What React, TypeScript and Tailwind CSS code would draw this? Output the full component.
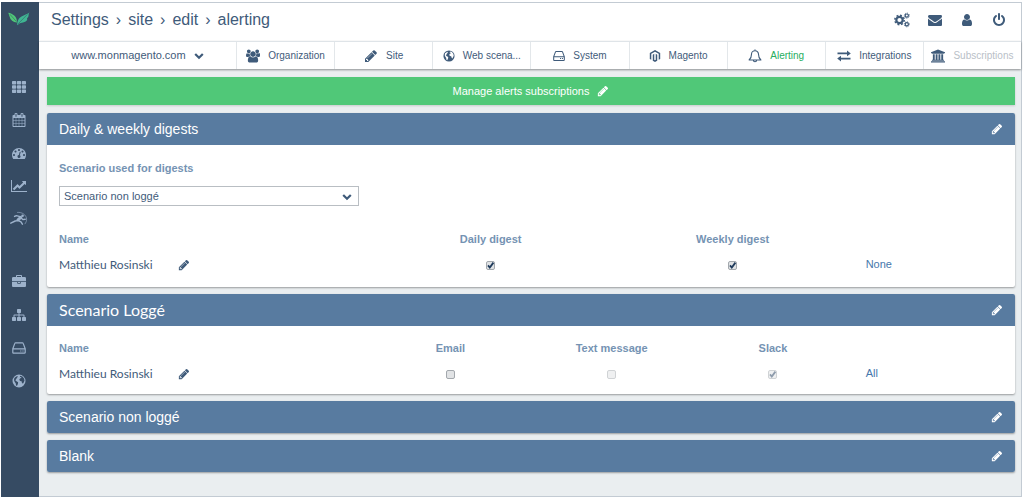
import { ReactNode, useState } from "react";
import { FaMagento } from "react-icons/fa";

type IconProps = { className?: string };

const paths = {
  pencil: "M491 1536l91-91-235-235-91 91v107h128v128h107zm523-928q0-22-22-22-10 0-17 7l-542 542q-7 7-7 17 0 22 22 22 10 0 17-7l542-542q7-7 7-17zm-54-192l416 416-832 832h-416v-416zm683 96q0 53-37 90l-166 166-416-416 166-165q36-38 90-38 53 0 91 38l235 234q37 39 37 91z",
  power: "M1664 896q0 156-61 298t-164 245-245 164-298 61-298-61-245-164-164-245-61-298q0-182 80.5-343t226.5-270q43-32 95.5-25t83.5 50q32 42 24.5 94.5t-49.5 84.5q-98 74-151.5 181t-53.5 228q0 104 40.5 198.5t109.5 163.5 163.5 109.5 198.5 40.5 198.5-40.5 163.5-109.5 109.5-163.5 40.5-198.5q0-121-53.5-228t-151.5-181q-42-32-49.5-84.5t24.5-94.5q31-43 84-50t95 25q146 109 226.5 270t80.5 343zm-640-768v640q0 52-38 90t-90 38-90-38-38-90v-640q0-52 38-90t90-38 90 38 38 90z",
  user: "M1536 1399q0 109-62.5 187t-150.5 78h-854q-88 0-150.5-78t-62.5-187q0-85 8.5-160.5t31.5-152 58.5-131 94-89 134.5-34.5q131 128 313 128t313-128q76 0 134.5 34.5t94 89 58.5 131 31.5 152 8.5 160.5zm-256-887q0 159-112.5 271.5t-271.5 112.5-271.5-112.5-112.5-271.5 112.5-271.5 271.5-112.5 271.5 112.5 112.5 271.5z",
  envelope: "M1792 710v794q0 66-47 113t-113 47h-1472q-66 0-113-47t-47-113v-794q44 49 101 87 362 246 497 345 57 42 92.5 65.5t94.5 48 110 24.5h2q51 0 110-24.5t94.5-48 92.5-65.5q170-123 498-345 57-39 100-87zm0-294q0 79-49 151t-122 123q-376 261-468 325-10 7-42.5 31t-54 38.5-52 32.5-57.5 27-50 9h-2q-23 0-50-9t-57.5-27-52-32.5-54-38.5-42.5-31q-91-64-262-182.5t-205-142.5q-62-42-117-115.5t-55-136.5q0-78 41.5-130t118.5-52h1472q65 0 112.5 47t47.5 113z",
  users: "M529 896q-162 5-265 128h-134q-82 0-138-40.5t-56-118.5q0-353 124-353 6 0 43.5 21t97.5 42.5 119 21.5q67 0 133-23-5 37-5 66 0 159 90 287zm1071 637q0 120-73 189.5t-194 69.5h-874q-121 0-194-69.5t-73-189.5q0-53 3.5-103.5t14-109 26.5-108.5 43-97.5 62-81 85.5-53.5 111.5-20q10 0 43 21.5t73 48 107 48 135 21.5 135-21.5 107-48 73-48 43-21.5q61 0 111.5 20t85.5 53.5 62 81 43 97.5 26.5 108.5 14 109 3.5 103.5zm-1024-1277q0 106-75 181t-181 75-181-75-75-181 75-181 181-75 181 75 75 181zm704 384q0 159-112.5 271.5t-271.5 112.5-271.5-112.5-112.5-271.5 112.5-271.5 271.5-112.5 271.5 112.5 112.5 271.5zm576 225q0 78-56 118.5t-138 40.5h-134q-103-123-265-128 90-128 90-287 0-29-5-66 66 23 133 23 59 0 119-21.5t97.5-42.5 43.5-21q124 0 124 353zm-128-609q0 106-75 181t-181 75-181-75-75-181 75-181 181-75 181 75 75 181z",
  bank: "M896 0l960 384v128h-128q0 26-20.5 45t-48.5 19h-1526q-28 0-48.5-19t-20.5-45h-128v-128zm-704 640h256v768h128v-768h256v768h128v-768h256v768h128v-768h256v768h59q28 0 48.5 19t20.5 45v64h-1664v-64q0-26 20.5-45t48.5-19h59v-768zm1595 960q28 0 48.5 19t20.5 45v128h-1920v-128q0-26 20.5-45t48.5-19h1782z",
  briefcase: "M640 256h512v-128h-512v128zm1152 640v480q0 66-47 113t-113 47h-1472q-66 0-113-47t-47-113v-480h672v160q0 26 19 45t45 19h320q26 0 45-19t19-45v-160h672zm-768 0v128h-256v-128h256zm768-480v384h-1792v-384q0-66 47-113t113-47h352v-160q0-40 28-68t68-28h576q40 0 68 28t28 68v160h352q66 0 113 47t47 113z",
  sitemap: "M1792 1248v320q0 40-28 68t-68 28h-320q-40 0-68-28t-28-68v-320q0-40 28-68t68-28h96v-192h-512v192h96q40 0 68 28t28 68v320q0 40-28 68t-68 28h-320q-40 0-68-28t-28-68v-320q0-40 28-68t68-28h96v-192h-512v192h96q40 0 68 28t28 68v320q0 40-28 68t-68 28h-320q-40 0-68-28t-28-68v-320q0-40 28-68t68-28h96v-192q0-52 38-90t90-38h512v-192h-96q-40 0-68-28t-28-68v-320q0-40 28-68t68-28h320q40 0 68 28t28 68v320q0 40-28 68t-68 28h-96v192h512q52 0 90 38t38 90v192h96q40 0 68 28t28 68z",
  chart: "M2048 1536v128h-2048v-1536h128v1408h1920zm-128-1248v435q0 21-19.5 29.5t-35.5-7.5l-121-121-633 633q-10 10-23 10t-23-10l-233-233-416 416-192-192 585-585q10-10 23-10t23 10l233 233 464-464-121-121q-16-16-7.5-35.5t29.5-19.5h435q14 0 23 9t9 23z",
  gauge: "M384 1152q0-53-37.5-90.5t-90.5-37.5-90.5 37.5-37.5 90.5 37.5 90.5 90.5 37.5 90.5-37.5 37.5-90.5zm192-448q0-53-37.5-90.5t-90.5-37.5-90.5 37.5-37.5 90.5 37.5 90.5 90.5 37.5 90.5-37.5 37.5-90.5zm428 481l101-382q6-26-7.5-48.5t-38.5-29.5-48 6.5-30 39.5l-101 382q-60 5-107 43.5t-63 98.5q-20 77 20 146t117 89 146-20 89-117q16-60-6-117t-72-91zm660-33q0-53-37.5-90.5t-90.5-37.5-90.5 37.5-37.5 90.5 37.5 90.5 90.5 37.5 90.5-37.5 37.5-90.5zm-640-640q0-53-37.5-90.5t-90.5-37.5-90.5 37.5-37.5 90.5 37.5 90.5 90.5 37.5 90.5-37.5 37.5-90.5zm448 192q0-53-37.5-90.5t-90.5-37.5-90.5 37.5-37.5 90.5 37.5 90.5 90.5 37.5 90.5-37.5 37.5-90.5zm320 448q0 261-141 483-19 29-54 29h-1402q-35 0-54-29-141-221-141-483 0-182 71-348t191-286 286-191 348-71 348 71 286 191 191 286 71 348z",
  calendar: "M192 1664h288v-288h-288v288zm352 0h320v-288h-320v288zm-352-352h288v-320h-288v320zm352 0h320v-320h-320v320zm-352-384h288v-288h-288v288zm736 736h320v-288h-320v288zm-384-736h320v-288h-320v288zm768 736h288v-288h-288v288zm-384-352h320v-320h-320v320zm-352-864v-288q0-13-9.5-22.5t-22.5-9.5h-64q-13 0-22.5 9.5t-9.5 22.5v288q0 13 9.5 22.5t22.5 9.5h64q13 0 22.5-9.5t9.5-22.5zm736 864h288v-320h-288v320zm-384-384h320v-288h-320v288zm384 0h288v-288h-288v288zm32-480v-288q0-13-9.5-22.5t-22.5-9.5h-64q-13 0-22.5 9.5t-9.5 22.5v288q0 13 9.5 22.5t22.5 9.5h64q13 0 22.5-9.5t9.5-22.5zm384-64v1280q0 52-38 90t-90 38h-1408q-52 0-90-38t-38-90v-1280q0-52 38-90t90-38h128v-96q0-66 47-113t113-47h64q66 0 113 47t47 113v96h384v-96q0-66 47-113t113-47h64q66 0 113 47t47 113v96h128q52 0 90 38t38 90z",
};

const Glyph = ({ name, box = "0 0 1792 1792", className = "size-3.5" }: IconProps & {
  name: keyof typeof paths;
  box?: string;
}) => (
  <svg viewBox={box} fill="currentColor" className={`shrink-0 ${className}`} aria-hidden="true">
    <path d={paths[name]} />
  </svg>
);

const Pencil = ({ className = "size-3" }: IconProps) => <Glyph name="pencil" className={className} />;

const Chevron = ({ className = "size-2.5" }: IconProps) => (
  <svg viewBox="0 0 10 10" fill="none" stroke="currentColor" strokeWidth="2.2" className={className} aria-hidden="true">
    <path d="M1.200 3 5 6.800 8.800 3" />
  </svg>
);

const GlobeIcon = ({ className = "size-3" }: IconProps) => (
  <svg viewBox="0 0 14 14" fill="currentColor" fillRule="evenodd" className={`shrink-0 ${className}`} aria-hidden="true">
    <path d="M7 .5a6.500 6.500 0 1 0 0 13a6.500 6.500 0 0 0 0-13ZM8.200 1.800 10.400 2.400 12 4.400 12.500 6.600 11.800 8.200 10.900 9.800 9.800 8.400 9.600 7.200 8 6.900 7.300 5.600 8.200 4.200 9.500 3.900 8.900 3.100 7.800 3.300ZM2.400 3.900 4.200 2.500 5.800 2.100 5.300 3.500 4.500 4.500 3.900 5.600 3.300 6.200 4.500 7.300 6.100 8.200 5.900 9.900 4.900 11.900 4 11.300 3.700 9.300 2.600 7.700 2 6Z" />
  </svg>
);

const GridIcon = () => (
  <svg viewBox="0 0 14 12" fill="currentColor" className="h-3 w-3.5" aria-hidden="true">
    {[0, 4.9, 9.8].map((x) =>
      [0, 4.2, 8.4].map((y) => <rect key={`${x}-${y}`} x={x} y={y} width="4.2" height="3.5" rx="0.7" />)
    )}
  </svg>
);

const DiskIcon = ({ className = "size-3" }: IconProps) => (
  <svg viewBox="0 0 14 14" fill="none" stroke="currentColor" strokeWidth="1.2" strokeLinejoin="round" className={`shrink-0 ${className}`} aria-hidden="true">
    <path d="M.8 7.8 2.8 2.4Q3 1.8 3.6 1.8H10.4Q11 1.8 11.2 2.4L13.2 7.8V11.4Q13.2 12.2 12.4 12.2H1.6Q.8 12.2.8 11.4ZM.8 7.8H13.2" />
    <path d="M8.2 10h1.2M10.4 10h1.2" />
  </svg>
);

const BellIcon = () => (
  <svg viewBox="0 0 14 14" fill="none" stroke="currentColor" strokeWidth="1.1" strokeLinejoin="round" strokeLinecap="round" className="size-3.5 shrink-0" aria-hidden="true">
    <path d="M7 .7v1.1M7 1.8C4.7 1.8 3.5 3.4 3.5 5.2C3.5 8.4 2.6 9.7 1.1 11H12.9C11.4 9.7 10.5 8.4 10.5 5.2C10.5 3.4 9.3 1.8 7 1.8ZM5.4 11.2a1.6 1.6 0 0 0 3.2 0" />
  </svg>
);

const ExchangeIcon = () => (
  <svg viewBox="0 0 14 12" fill="currentColor" className="h-3 w-3.5 shrink-0" aria-hidden="true">
    <path d="M.5 2.6H10V.4L13.8 3.4 10 6.3V4.2H.5ZM13.5 7.8H4V5.7L.2 8.6 4 11.6V9.4H13.5Z" />
  </svg>
);

const CogsIcon = () => (
  <svg viewBox="0 0 16 16" fill="none" stroke="currentColor" className="size-4" aria-hidden="true">
    <circle cx="5.5" cy="8" r="3.2" strokeWidth="2.2" />
    <circle cx="5.5" cy="8" r="4.7" strokeWidth="1.5" strokeDasharray="1.9 1.79" />
    <circle cx="12.8" cy="3.6" r="1.6" strokeWidth="1.2" />
    <circle cx="12.8" cy="3.6" r="2.5" strokeWidth="0.9" strokeDasharray="1 0.96" />
    <circle cx="12.8" cy="12.3" r="1.6" strokeWidth="1.2" />
    <circle cx="12.8" cy="12.3" r="2.5" strokeWidth="0.9" strokeDasharray="1 0.96" />
  </svg>
);

const RunnerIcon = () => (
  <svg viewBox="0 0 18 16" fill="none" stroke="currentColor" strokeLinecap="round" strokeLinejoin="round" className="h-4 w-[18px]" aria-hidden="true">
    <path d="M7.500 1.400C12 .8 16.500 4 16.600 8.200C16.600 10 16 11.600 15 12.800" strokeWidth="0.6" />
    <circle cx="12.600" cy="4.800" r="1.300" fill="currentColor" stroke="none" />
    <path d="M10.800 6.400 8 8.800" strokeWidth="3" />
    <path d="M10 5.600 6.400 4.600 4.600 5.400M11.400 7.200 12.800 8.600 15.200 8.200M8 9.600 5.200 10 .8 12.200M8.400 9.600 11 10.800 12.400 13.200" strokeWidth="1.4" />
  </svg>
);

const Logo = () => (
  <svg viewBox="0 0 22 14" className="h-3.5 w-[22px]" aria-hidden="true">
    <path d="M.3.8C4 1.6 7.600 3.800 8.600 7.200L9 10.600C5 10.400 2.400 8.200 1.600 4.800Z" fill="#4fc878" />
    <path d="M21.700.3C20.600 1.200 20.800 2.600 20.400 4.400L19 6.600 19.200 8C17.400 10.400 14.500 10.300 11.800 11.300L9.300 13.300C9 9.500 10.500 5.800 14 4.200C17 2.900 19.600 2 21.700.3Z" fill="#3fb592" />
    <path d="M2 2.400 8.400 9.600M19.400 2.400 10 12" stroke="#364b63" strokeWidth="0.5" fill="none" />
  </svg>
);

const sideTop = [
  { label: "Dashboard", icon: <GridIcon /> },
  { label: "Calendar", icon: <Glyph name="calendar" /> },
  { label: "Performance", icon: <Glyph name="gauge" /> },
  { label: "Charts", icon: <Glyph name="chart" box="0 0 2048 1792" className="h-3.5 w-4" /> },
  { label: "Activity", icon: <RunnerIcon /> },
];

const sideBottom = [
  { label: "Projects", icon: <Glyph name="briefcase" /> },
  { label: "Sitemap", icon: <Glyph name="sitemap" /> },
  { label: "Servers", icon: <DiskIcon className="size-3.5" /> },
  { label: "World", icon: <GlobeIcon className="size-3.5" /> },
];

const SideLinks = ({ items }: { items: typeof sideTop }) => (
  <ul>
    {items.map((item) => (
      <li key={item.label}>
        <a href="#" aria-label={item.label} className="flex h-[33px] items-center justify-center pr-0.5">
          {item.icon}
        </a>
      </li>
    ))}
  </ul>
);

const tabs = [
  { label: "Organization", icon: <Glyph name="users" box="-64 0 1920 1792" /> },
  { label: "Site", icon: <Pencil className="size-3.5" /> },
  { label: "Web scena...", icon: <GlobeIcon /> },
  { label: "System", icon: <DiskIcon /> },
  { label: "Magento", icon: <FaMagento className="size-3 shrink-0" /> },
  { label: "Alerting", icon: <BellIcon />, color: "text-[#27ae60]" },
  { label: "Integrations", icon: <ExchangeIcon /> },
  { label: "Subscriptions", icon: <Glyph name="bank" box="-64 0 1920 1792" />, color: "text-[#b9c0c7]" },
];

const Panel = ({ title, titleFont = "text-sm", children }: {
  title: string;
  titleFont?: string;
  children?: ReactNode;
}) => (
  <section className="overflow-hidden rounded-xs bg-white shadow-[0_1px_2px_rgba(0,0,0,0.35)]">
    <header className="flex h-8 items-center justify-between bg-[#587ba0] px-3 text-white">
      <h2 className={titleFont}>{title}</h2>
      <button aria-label={`Edit ${title}`}>
        <Pencil />
      </button>
    </header>
    {children}
  </section>
);

const Check = ({ label, initial = false, disabled = false }: {
  label: string;
  initial?: boolean;
  disabled?: boolean;
}) => {
  const [checked, setChecked] = useState(initial);
  return (
    <label className={`relative inline-block size-[9px] align-middle ${disabled ? "opacity-50" : ""}`}>
      <input
        type="checkbox"
        aria-label={label}
        checked={checked}
        disabled={disabled}
        onChange={(e) => setChecked(e.target.checked)}
        className="block size-[9px] appearance-none rounded-xs border border-[#a3a8ad] bg-[#e1e3e5]"
      />
      {checked && (
        <svg viewBox="0 0 9 9" fill="none" stroke="#1f3b5c" strokeWidth="1.8" className="pointer-events-none absolute inset-0 size-[9px]">
          <path d="M2 4.400 3.800 6.600 7.400 1.600" />
        </svg>
      )}
    </label>
  );
};

type Column = { label: string; checked?: boolean; disabled?: boolean };

const SubscriberTable = ({ columns, action, width }: {
  columns: Column[];
  action: string;
  width: string;
}) => (
  <table className="w-full table-fixed text-left text-[11px]">
    <thead className="text-[#7593b3]">
      <tr className="h-[25px]">
        <th className="w-1/3 pl-3">Name</th>
        {columns.map((c) => (
          <th key={c.label} className={`text-center ${width}`}>{c.label}</th>
        ))}
        <td className="w-1/6"></td>
      </tr>
    </thead>
    <tbody>
      <tr className="h-[25px]">
        <td className="pl-3">
          <div className="flex items-center">
            <span className="w-[119px] font-[Lato] text-xs">Matthieu Rosinski</span>
            <button aria-label="Edit Matthieu Rosinski">
              <Pencil />
            </button>
          </div>
        </td>
        {columns.map((c) => (
          <td key={c.label} className="text-center leading-none">
            <Check label={c.label} initial={c.checked} disabled={c.disabled} />
          </td>
        ))}
        <td className="pl-3">
          <a href="#" className="text-[#4677ab]">{action}</a>
        </td>
      </tr>
    </tbody>
  </table>
);

const App = () => {
  const [scenario, setScenario] = useState("Scenario non loggé");

  return (
    <div className="flex min-h-screen bg-white pt-0.5 pr-0.5 pb-0.5 pl-px font-['Liberation_Sans',Arial,sans-serif] text-[#3f5b7a]">
      <aside className="w-[38px] shrink-0 bg-[#364b63] text-[#9db2cb]">
        <a href="#" aria-label="Home" className="mb-[34px] flex h-[34px] items-center justify-center pr-0.5">
          <Logo />
        </a>
        <nav className="flex flex-col gap-[30px]">
          <SideLinks items={sideTop} />
          <SideLinks items={sideBottom} />
        </nav>
      </aside>

      <div className="min-w-0 flex-1 border-y border-r border-[#c3cbd3] bg-[#eaeef0]">
        <header className="flex h-[38px] items-center justify-between bg-white pr-[15px] pb-1 pl-3">
          <h1 className="flex gap-[7px] text-base">
            <span>Settings</span>
            <span>›</span>
            <span>site</span>
            <span>›</span>
            <span>edit</span>
            <span>›</span>
            <span>alerting</span>
          </h1>
          <div className="flex items-center gap-[18px]">
            <button aria-label="Preferences"><CogsIcon /></button>
            <button aria-label="Messages"><Glyph name="envelope" /></button>
            <button aria-label="Account"><Glyph name="user" /></button>
            <button aria-label="Log out"><Glyph name="power" /></button>
          </div>
        </header>

        <nav className="flex h-7 border-t border-[#dfe4e8] bg-white shadow-[0_1px_2px_rgba(0,0,0,0.4)]">
          <button className="flex w-[197px] shrink-0 items-center justify-center gap-2 text-[11px]">
            www.monmagento.com
            <Chevron />
          </button>
          {tabs.map((tab) => (
            <a key={tab.label} href="#" className="flex min-w-0 flex-1 items-center justify-center gap-2 border-l border-[#e3e7ea] text-[10px] whitespace-nowrap">
              {tab.icon}
              <span className={tab.color}>{tab.label}</span>
            </a>
          ))}
        </nav>

        <main className="flex flex-col gap-[7px] px-1.5 pt-2 pb-6 pl-2">
          <button className="mb-px flex h-7 items-center justify-center gap-2 bg-[#50c878] text-[11px] text-white shadow-[0_1px_2px_rgba(0,0,0,0.15)]">
            Manage alerts subscriptions
            <Pencil />
          </button>

          <Panel title="Daily & weekly digests">
            <div className="px-3 pt-[13px]">
              <label htmlFor="scenario" className="block text-[11px] leading-5 font-bold text-[#7593b3]">
                Scenario used for digests
              </label>
              <div className="relative mt-2 w-[300px]">
                <select
                  id="scenario"
                  value={scenario}
                  onChange={(e) => setScenario(e.target.value)}
                  className="block h-5 w-full appearance-none border border-[#b9bec3] bg-white px-1 text-[11px]"
                >
                  <option>Scenario non loggé</option>
                  <option>Scenario Loggé</option>
                  <option>Blank</option>
                </select>
                <Chevron className="pointer-events-none absolute top-1.5 right-[7px] size-2.5" />
              </div>
            </div>
            <div className="pt-[21px] pb-2.5">
              <SubscriberTable
                width="w-1/4"
                action="None"
                columns={[
                  { label: "Daily digest", checked: true },
                  { label: "Weekly digest", checked: true },
                ]}
              />
            </div>
          </Panel>

          <Panel title="Scenario Loggé" titleFont="font-[Lato] text-base">
            <div className="pt-2.5 pb-2">
              <SubscriberTable
                width="w-1/6"
                action="All"
                columns={[
                  { label: "Email" },
                  { label: "Text message", disabled: true },
                  { label: "Slack", checked: true, disabled: true },
                ]}
              />
            </div>
          </Panel>

          <Panel title="Scenario non loggé" />
          <Panel title="Blank" />
        </main>
      </div>
    </div>
  );
};

export default App;
